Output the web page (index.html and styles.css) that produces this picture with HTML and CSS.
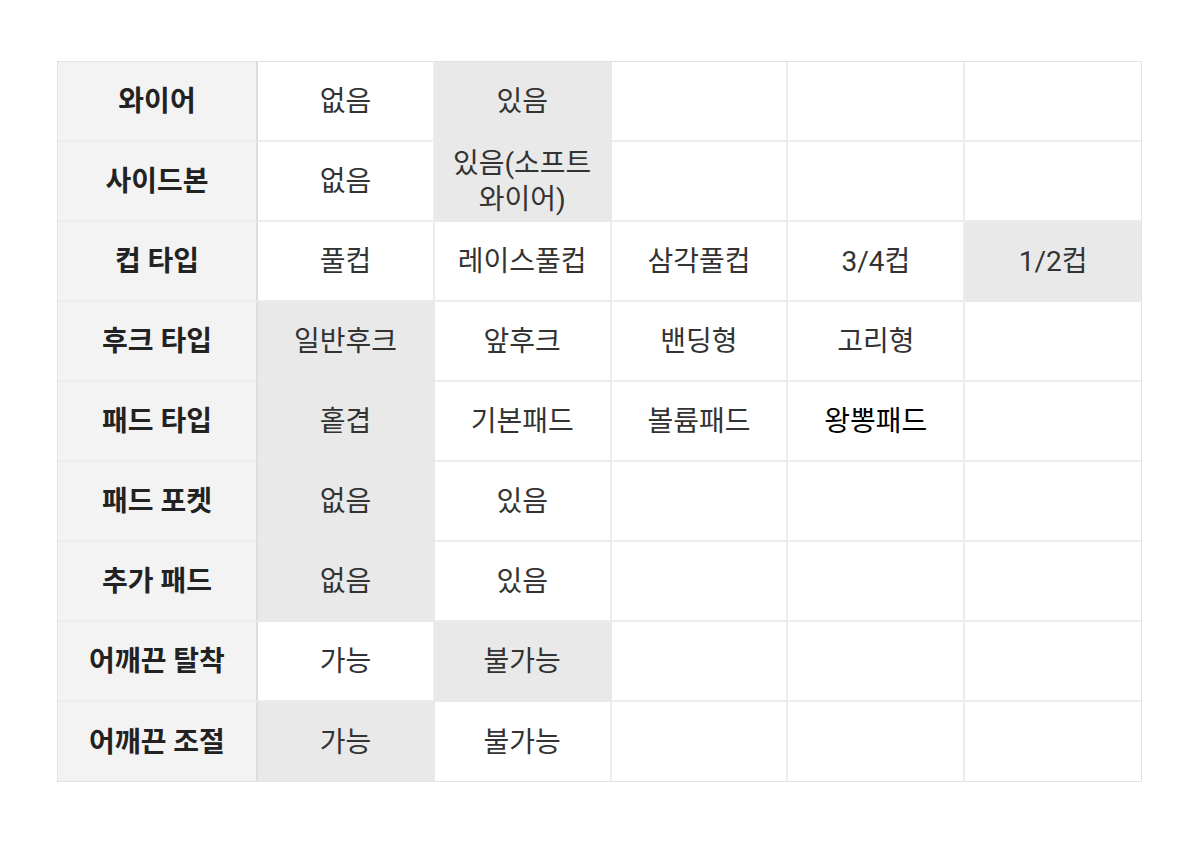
FILE: index.html
```html
<!DOCTYPE html>
<html lang="ko">
<head>
<meta charset="utf-8">
<link rel="stylesheet" href="styles.css">
</head>
<body>
<main class="page">
<table class="spec">
<colgroup>
<col class="c-head"><col class="c"><col class="c"><col class="c"><col class="c"><col class="c">
</colgroup>
<tbody>
<tr><th>와이어</th><td>없음</td><td class="on">있음</td><td></td><td></td><td></td></tr>
<tr><th>사이드본</th><td>없음</td><td class="on">있음(소프트 와이어)</td><td></td><td></td><td></td></tr>
<tr><th>컵 타입</th><td>풀컵</td><td>레이스풀컵</td><td>삼각풀컵</td><td>3/4컵</td><td class="on">1/2컵</td></tr>
<tr><th>후크 타입</th><td class="on">일반후크</td><td>앞후크</td><td>밴딩형</td><td>고리형</td><td></td></tr>
<tr><th>패드 타입</th><td class="on">홑겹</td><td>기본패드</td><td>볼륨패드</td><td class="dark">왕뽕패드</td><td></td></tr>
<tr><th>패드 포켓</th><td class="on">없음</td><td>있음</td><td></td><td></td><td></td></tr>
<tr><th>추가 패드</th><td class="on">없음</td><td>있음</td><td></td><td></td><td></td></tr>
<tr><th>어깨끈 탈착</th><td>가능</td><td class="on">불가능</td><td></td><td></td><td></td></tr>
<tr><th>어깨끈 조절</th><td class="on">가능</td><td>불가능</td><td></td><td></td><td></td></tr>
</tbody>
</table>
</main>
</body>
</html>
```
FILE: styles.css
```css
html, body {
  margin: 0;
  padding: 0;
  background: #ffffff;
}
.page {
  padding: 61px 0 0 57px;
}
.spec {
  width: 1085px;
  table-layout: fixed;
  border-collapse: separate;
  border-spacing: 0;
  border-top: 1px solid #e2e2e2;
  border-left: 1px solid #e2e2e2;
  font-family: Roboto, "Noto Sans CJK KR", sans-serif;
  font-size: 28px;
  line-height: 36px;
  word-break: keep-all;
}
.c-head { width: 200px; }
.c { width: 176.8px; }
.spec th,
.spec td {
  height: 80px;
  padding: 2px 6px 0;
  box-sizing: border-box;
  text-align: center;
  vertical-align: middle;
  border-right: 2px solid #ececec;
  border-bottom: 2px solid #ececec;
}
.spec tr:last-child th,
.spec tr:last-child td {
  border-bottom: 1px solid #e2e2e2;
}
.spec th {
  background: #f3f3f3;
  color: #222222;
  font-weight: 700;
  border-right-color: #dddddd;
}
.spec td {
  color: #333333;
  font-weight: 400;
}
.spec td:last-child {
  border-right: 1px solid #e2e2e2;
}
.spec td.on {
  background: #e9e9e9;
  border-bottom-color: #e9e9e9;
}
.spec td.on:not(:last-child) {
  border-right-color: #e9e9e9;
}
.spec td.dark {
  color: #000000;
}
```
